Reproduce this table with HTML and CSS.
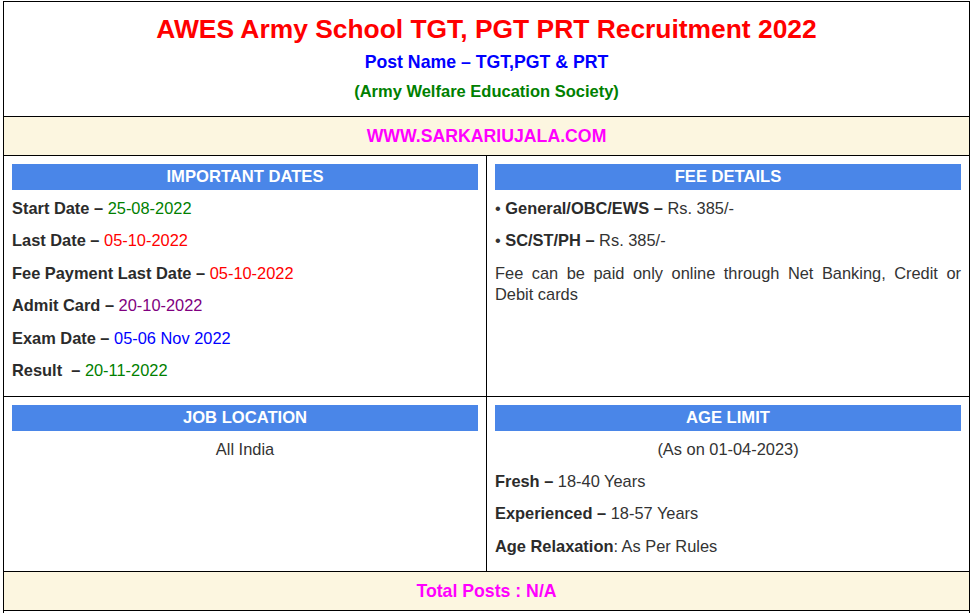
FILE: index.html
```html
<!DOCTYPE html>
<html>
<head>
<meta charset="utf-8">
<link rel="stylesheet" href="styles.css">
</head>
<body>
<table class="job">
  <tr>
    <td colspan="2" class="intro">
      <h1 class="title">AWES Army School TGT, PGT PRT Recruitment 2022</h1>
      <p class="post">Post Name – TGT,PGT &amp; PRT</p>
      <p class="org">(Army Welfare Education Society)</p>
    </td>
  </tr>
  <tr>
    <td colspan="2" class="band">WWW.SARKARIUJALA.COM</td>
  </tr>
  <tr>
    <td class="cell">
      <div class="head">IMPORTANT DATES</div>
      <p><b>Start Date –</b> <span class="green">25-08-2022</span></p>
      <p><b>Last Date –</b> <span class="red">05-10-2022</span></p>
      <p><b>Fee Payment Last Date –</b> <span class="red">05-10-2022</span></p>
      <p><b>Admit Card –</b> <span class="purple">20-10-2022</span></p>
      <p><b>Exam Date –</b> <span class="blue">05-06 Nov 2022</span></p>
      <p><b>Result&nbsp; –</b> <span class="green">20-11-2022</span></p>
    </td>
    <td class="cell">
      <div class="head">FEE DETAILS</div>
      <p>• <b>General/OBC/EWS –</b> Rs. 385/-</p>
      <p>• <b>SC/ST/PH –</b> Rs. 385/-</p>
      <p class="justify">Fee can be paid only online through Net Banking, Credit or Debit cards</p>
    </td>
  </tr>
  <tr>
    <td class="cell">
      <div class="head">JOB LOCATION</div>
      <p class="center">All India</p>
    </td>
    <td class="cell">
      <div class="head">AGE LIMIT</div>
      <p class="center">(As on 01-04-2023)</p>
      <p><b>Fresh –</b> 18-40 Years</p>
      <p><b>Experienced –</b> 18-57 Years</p>
      <p><b>Age Relaxation</b>: As Per Rules</p>
    </td>
  </tr>
  <tr>
    <td colspan="2" class="band">Total Posts : N/A</td>
  </tr>
  <tr>
    <td colspan="2" class="tail"></td>
  </tr>
</table>
</body>
</html>
```

FILE: styles.css
```css
html, body {
  margin: 0;
  padding: 0;
  background: #ffffff;
}
body {
  padding: 1px 0 0 3px;
  font-family: "Liberation Sans", Arial, sans-serif;
  font-size: 16.4px;
  color: #333333;
}
.job {
  border-collapse: collapse;
  width: 967px;
  table-layout: fixed;
}
.job td {
  border: 1px solid #000000;
  vertical-align: top;
}
.intro {
  padding: 10px 8px 13px;
  text-align: center;
}
.title {
  margin: 0;
  font-size: 26.4px;
  line-height: 34px;
  font-weight: bold;
  color: #ff0000;
}
.post {
  margin: 4px 0 0;
  font-size: 17.7px;
  line-height: 24px;
  font-weight: bold;
  color: #0000ff;
}
.org {
  margin: 5px 0 0;
  font-size: 16.5px;
  line-height: 24px;
  font-weight: bold;
  color: #008000;
}
.band {
  background: #fcf6e0;
  text-align: center;
  font-weight: bold;
  font-size: 17.7px;
  line-height: 38px;
  color: #ff00ff;
  padding: 0;
}
.cell {
  padding: 8px 8px 14px;
}
.head {
  background: #4a86e8;
  color: #ffffff;
  font-weight: bold;
  font-size: 16.6px;
  text-align: center;
  height: 26px;
  line-height: 26px;
  margin-bottom: 8px;
}
.cell p {
  margin: 0 0 10.8px;
  line-height: 21.6px;
}
.cell p:last-child {
  margin-bottom: 0;
}
.cell b {
  color: #2b2b2b;
}
.justify {
  text-align: justify;
}
.center {
  text-align: center;
}
.green { color: #008000; }
.red { color: #ff0000; }
.purple { color: #800080; }
.blue { color: #0000ff; }
.tail {
  height: 20px;
  padding: 0;
}
```
